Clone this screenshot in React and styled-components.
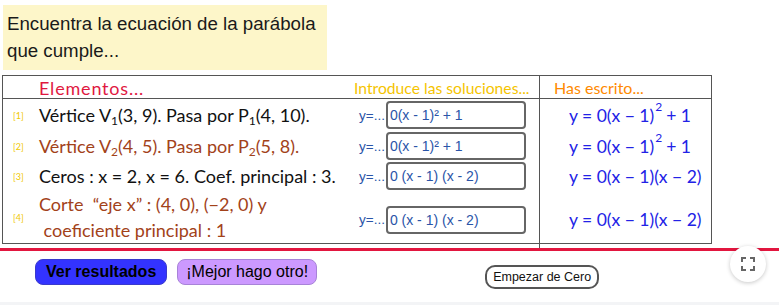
import React from 'react'
import styled, { createGlobalStyle } from 'styled-components'

const GlobalStyle = createGlobalStyle`
  html, body {
    margin: 0;
    padding: 0;
    background: #ffffff;
  }
  body {
    font-family: "Liberation Sans", Arial, sans-serif;
  }
`;

const Page = styled.div`
  position: relative;
  width: 779px;
  height: 305px;
  overflow: hidden;
  background: #ffffff;
  display: flex;
  flex-direction: column;
`;

const Prompt = styled.div`
  margin: 5px 0 0 3px;
  width: 324px;
  height: 65px;
  box-sizing: border-box;
  padding: 5px 0 0 4px;
  background: #fdf6c9;
  color: #1a1a1a;
  font-size: 18.7px;
  line-height: 27px;
`;

const Table = styled.div`
  margin: 5px 0 0 2px;
  width: 710px;
  height: 169px;
  box-sizing: border-box;
  border: 1px solid #555;
  display: grid;
  grid-template-columns: 36px 310px 190px 1fr;
  grid-template-rows: 23px 32px 30px 30px 1fr;
  font-family: "Lato", "DejaVu Sans", sans-serif;
`;

const HeadCell = styled.div`
  border-bottom: 1px solid #555;
  border-left: ${(p) => (p.$sep ? '1px solid #555' : 'none')};
  color: ${(p) => p.color};
  font-size: ${(p) => p.$size || 16}px;
  letter-spacing: ${(p) => p.$spread || 0}px;
  display: flex;
  align-items: center;
  padding-left: ${(p) => p.$pad || 0}px;
  padding-top: 1px;
  white-space: nowrap;
`;

const Tag = styled.div`
  color: #f0c800;
  font-size: 9px;
  display: flex;
  align-items: center;
  padding-left: 10px;
  padding-bottom: ${(p) => (p.$multi ? 4 : 0)}px;
`;

const Statement = styled.div`
  color: ${(p) => p.color};
  font-size: 18px;
  line-height: 26px;
  display: flex;
  flex-direction: column;
  justify-content: center;
  padding-bottom: ${(p) => (p.$multi ? 5 : 0)}px;
  white-space: nowrap;
  sub {
    font-size: 12px;
    vertical-align: -3px;
    line-height: 0;
  }
`;

const AnswerCell = styled.div`
  display: flex;
  align-items: center;
  padding-left: 10px;
`;

const Lead = styled.span`
  color: #2a54a8;
  font-family: "Liberation Sans", Arial, sans-serif;
  font-size: 13.5px;
  margin-right: 1px;
`;

const Field = styled.div`
  width: 140px;
  height: 28px;
  box-sizing: border-box;
  border: 2px solid #666;
  border-radius: 4px;
  color: #2a54a8;
  font-family: "Liberation Sans", Arial, sans-serif;
  font-size: 14px;
  display: flex;
  align-items: center;
  padding-left: 2px;
`;

const Result = styled.div`
  border-left: 1px solid #555;
  color: #2222e6;
  font-size: 17.5px;
  display: flex;
  align-items: center;
  padding-left: 29px;
  white-space: nowrap;
`;

const Power = styled.span`
  font-size: 12px;
  line-height: 0;
  position: relative;
  top: -8px;
  margin: 0 4px 0 1px;
`;

const RedLine = styled.div`
  margin-top: 4px;
  height: 3px;
  background: #e2163f;
`;

const ButtonBar = styled.div`
  display: flex;
  align-items: flex-start;
  padding-left: 35px;
  margin-top: 8px;
  height: 43px;
`;

const Action = styled.button`
  height: 26px;
  box-sizing: border-box;
  padding: 0 ${(p) => p.$pad}px;
  border: 1px solid ${(p) => p.$edge};
  border-radius: 8px;
  background: ${(p) => p.$bg};
  color: #000;
  font-family: "Liberation Sans", Arial, sans-serif;
  font-size: 16px;
  font-weight: ${(p) => (p.$bold ? 700 : 400)};
  margin-right: 10px;
  white-space: nowrap;
`;

const Restart = styled.button`
  margin: 6px 0 0 158px;
  width: 114px;
  height: 24px;
  box-sizing: border-box;
  padding: 0;
  border: 2px solid #555;
  border-radius: 10px;
  background: #fff;
  color: #111;
  font-family: "Liberation Sans", Arial, sans-serif;
  font-size: 12.5px;
  white-space: nowrap;
`;

const Footer = styled.div`
  flex: 1;
  background: #f3f4f6;
`;

const FullScreen = styled.div`
  position: absolute;
  left: 730px;
  top: 246px;
  width: 36px;
  height: 36px;
  border-radius: 50%;
  background: #fff;
  box-shadow: 0 1px 4px rgba(0, 0, 0, 0.22);
  display: flex;
  align-items: center;
  justify-content: center;
`;

const rows = [
  {
    tag: '[1]',
    color: '#111',
    lines: [<>Vértice V<sub>1</sub>(3, 9). Pasa por P<sub>1</sub>(4, 10).</>],
    field: '0(x - 1)² + 1',
    result: <>y = 0(x − 1)<Power>2</Power>+ 1</>,
  },
  {
    tag: '[2]',
    color: '#a2421a',
    lines: [<>Vértice V<sub>2</sub>(4, 5). Pasa por P<sub>2</sub>(5, 8).</>],
    field: '0(x - 1)² + 1',
    result: <>y = 0(x − 1)<Power>2</Power>+ 1</>,
  },
  {
    tag: '[3]',
    color: '#111',
    lines: [<>Ceros : x = 2, x = 6. Coef. principal : 3.</>],
    field: '0 (x - 1) (x - 2)',
    result: <>y = 0(x − 1)(x − 2)</>,
  },
  {
    tag: '[4]',
    color: '#a2421a',
    multi: true,
    lines: [<>Corte &nbsp;“eje x” : (4, 0), (−2, 0) y</>, <>&nbsp;coeficiente principal : 1</>],
    field: '0 (x - 1) (x - 2)',
    result: <>y = 0(x − 1)(x − 2)</>,
  },
];

export default function App() {
  return (
    <Page>
      <GlobalStyle />
      <Prompt>
        Encuentra la ecuación de la parábola
        <br />
        que cumple...
      </Prompt>
      <Table>
        <HeadCell />
        <HeadCell color="#e0183f" $size={18} $spread={0.8}>Elementos...</HeadCell>
        <HeadCell color="#f5c400" $pad={5} $size={15.7}>Introduce las soluciones...</HeadCell>
        <HeadCell color="#ff8a00" $pad={14} $sep>Has escrito...</HeadCell>
        {rows.map((r) => (
          <React.Fragment key={r.tag}>
            <Tag $multi={r.multi}>{r.tag}</Tag>
            <Statement color={r.color} $multi={r.multi}>
              {r.lines.map((l, i) => (
                <span key={i}>{l}</span>
              ))}
            </Statement>
            <AnswerCell>
              <Lead>y=...</Lead>
              <Field>{r.field}</Field>
            </AnswerCell>
            <Result>{r.result}</Result>
          </React.Fragment>
        ))}
      </Table>
      <RedLine />
      <ButtonBar>
        <Action $bg="#3333ff" $edge="#3a3acc" $pad={10} $bold>Ver resultados</Action>
        <Action $bg="#cc99ff" $edge="#a883d8" $pad={8}>¡Mejor hago otro!</Action>
        <Restart>Empezar de Cero</Restart>
      </ButtonBar>
      <Footer />
      <FullScreen>
        <svg width="14" height="14" viewBox="0 0 14 14" fill="none" stroke="#666" strokeWidth="2">
          <path d="M1 5V1h4M9 1h4v4M13 9v4H9M5 13H1V9" />
        </svg>
      </FullScreen>
    </Page>
  );
}
